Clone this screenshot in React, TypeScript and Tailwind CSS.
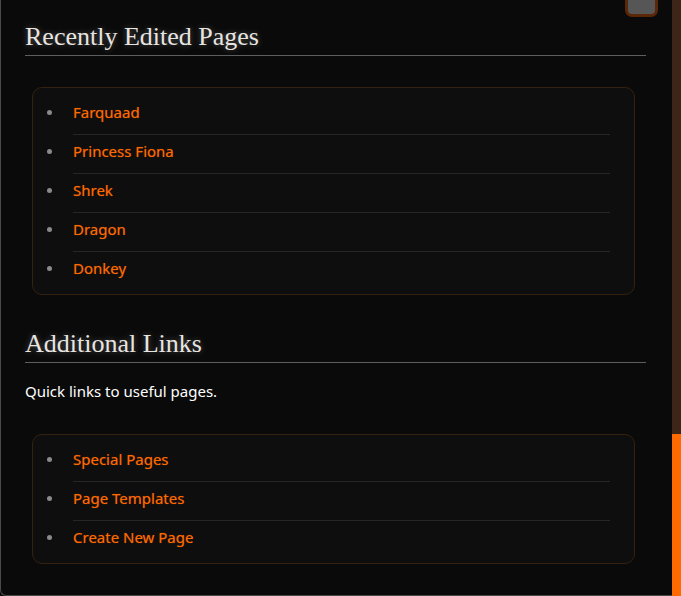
const RECENT = ["Farquaad", "Princess Fiona", "Shrek", "Dragon", "Donkey"];
const LINKS = ["Special Pages", "Page Templates", "Create New Page"];

function LinkCard({ items }: { items: string[] }) {
  return (
    <div className="ml-[7px] mr-[11px] rounded-[10px] border border-[#35210f] bg-[#0e0e0e] pb-[4px] pl-[40px] pr-[24px] pt-[8px]">
      <ul>
        {items.map((item, i) => (
          <li
            key={item}
            className={`relative pb-[11px] pt-[5px] text-[15px] leading-[22px] ${
              i < items.length - 1 ? "border-b border-[#262626]" : ""
            }`}
          >
            <span className="absolute left-[-26px] top-[14px] h-[5px] w-[5px] rounded-full bg-[#8a8a8a]" />
            <a className="text-[#ff6a00] [text-shadow:0_0_1px_rgba(255,106,0,0.5)]">{item}</a>
          </li>
        ))}
      </ul>
    </div>
  );
}

function Heading({ children }: { children: string }) {
  return (
    <h2 className="border-b border-[#5e5e5e] pb-[3px] font-['Liberation_Serif',serif] text-[26px] leading-[30px] text-[#e8e5e1] [text-shadow:0_0_6px_rgba(255,255,255,0.3)]">
      {children}
    </h2>
  );
}

export default function App() {
  return (
    <div className="flex h-[596px] w-[681px] overflow-hidden bg-[#0a0a0a] font-['Noto_Sans',sans-serif]">
      <div className="relative h-[596px] flex-1 rounded-bl-[6px] border-b border-l border-[#4a4a4a] pl-[24px] pr-[26px] pt-[22px]">
        {/* back-to-top button, cut off by the viewport */}
        <div className="absolute right-[14px] top-[-16px] h-[33px] w-[33px] rounded-[7px] border-[3px] border-[#5a2708] bg-[#565656]" />

        <Heading>Recently Edited Pages</Heading>
        <div className="mt-[31px]">
          <LinkCard items={RECENT} />
        </div>

        <div className="mt-[34px]">
          <Heading>Additional Links</Heading>
        </div>
        <p className="mt-[17px] text-[15px] leading-[22px] text-white">Quick links to useful pages.</p>
        <div className="mt-[32px]">
          <LinkCard items={LINKS} />
        </div>
      </div>

      {/* scrollbar */}
      <div className="flex h-[596px] w-[9px] flex-col bg-[#3d2518]">
        <div className="h-[434px]" />
        <div className="flex-1 bg-[#ff6a00]" />
      </div>
    </div>
  );
}
